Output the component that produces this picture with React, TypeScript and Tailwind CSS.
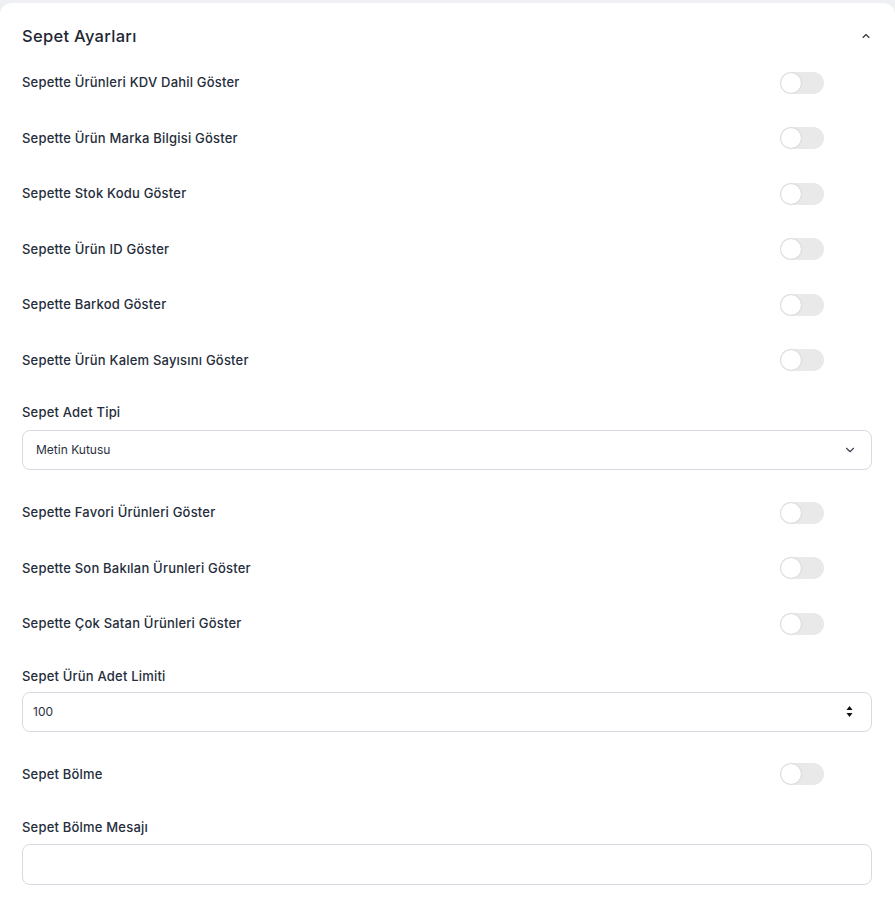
import React from 'react';

const toggles1 = [
    'Sepette Ürünleri KDV Dahil Göster',
    'Sepette Ürün Marka Bilgisi Göster',
    'Sepette Stok Kodu Göster',
    'Sepette Ürün ID Göster',
    'Sepette Barkod Göster',
    'Sepette Ürün Kalem Sayısını Göster',
];

const toggles2 = [
    'Sepette Favori Ürünleri Göster',
    'Sepette Son Bakılan Ürunleri Göster',
    'Sepette Çok Satan Ürünleri Göster',
];

const Toggle: React.FC = () => (
    <div className="w-[44px] h-[22px] rounded-full bg-[#e9e9ea] p-[1px] flex items-center mr-[48px]">
        <div className="w-[20px] h-[20px] rounded-full bg-white shadow-[0_0_2px_rgba(0,0,0,0.18)]" />
    </div>
);

const ToggleRow: React.FC<{ label: string }> = ({ label }) => (
    <div className="h-[55.5px] flex items-center justify-between">
        <span className="text-[13px] tracking-[0.2px] font-medium text-[#252d3b]">{label}</span>
        <Toggle />
    </div>
);

const FieldLabel: React.FC<{ children: React.ReactNode; className?: string }> = ({ children, className }) => (
    <div className={`h-[20px] leading-[20px] text-[13px] tracking-[0.2px] font-medium text-[#252d3b] ${className ?? ''}`}>{children}</div>
);

export default function App() {
    return (
        <div className="min-h-[901px] bg-[#eef0f4] pt-[3px] overflow-hidden" style={{ fontFamily: 'Inter, "Noto Sans", sans-serif' }}>
            <div className="bg-white rounded-t-xl min-h-[898px] pl-[22px] pr-[23px] pt-[19px]">
                <div className="h-[28px] flex items-center justify-between">
                    <h2 className="text-[16.5px] tracking-[0.3px] font-medium text-[#1f2735]">Sepet Ayarları</h2>
                    <svg width="12" height="12" viewBox="0 0 24 24" fill="none" stroke="#333" strokeWidth="2.2" strokeLinecap="round" strokeLinejoin="round">
                        <path d="M6 15l6-6 6 6" />
                    </svg>
                </div>

                <div className="mt-[5px]">
                    {toggles1.map((t) => (
                        <ToggleRow key={t} label={t} />
                    ))}
                </div>

                <FieldLabel className="mt-[14px]">Sepet Adet Tipi</FieldLabel>
                <div className="mt-[8px] h-[40px] border border-[#d6dae1] rounded-lg flex items-center justify-between pl-[13px] pr-[14px]">
                    <span className="text-[12px] text-[#2a3140]">Metin Kutusu</span>
                    <svg width="14" height="14" viewBox="0 0 24 24" fill="none" stroke="#3d4452" strokeWidth="2" strokeLinecap="round" strokeLinejoin="round">
                        <path d="M6 9l6 6 6-6" />
                    </svg>
                </div>

                <div className="mt-[15px]">
                    {toggles2.map((t) => (
                        <ToggleRow key={t} label={t} />
                    ))}
                </div>

                <FieldLabel className="mt-[14px]">Sepet Ürün Adet Limiti</FieldLabel>
                <div className="mt-[6px] h-[40px] border border-[#d6dae1] rounded-lg flex items-center justify-between pl-[10px] pr-[18px]">
                    <span className="text-[12px] text-[#2a3140]">100</span>
                    <svg width="7" height="13" viewBox="0 0 7 13" fill="#111">
                        <path d="M3.5 1L6.5 5H0.5Z" />
                        <path d="M3.5 12L6.5 8H0.5Z" />
                    </svg>
                </div>

                <div className="mt-[15px]">
                    <ToggleRow label="Sepet Bölme" />
                </div>

                <FieldLabel className="mt-[15px]">Sepet Bölme Mesajı</FieldLabel>
                <div className="mt-[7px] h-[41px] border border-[#d6dae1] rounded-lg" />
            </div>
        </div>
    );
}
